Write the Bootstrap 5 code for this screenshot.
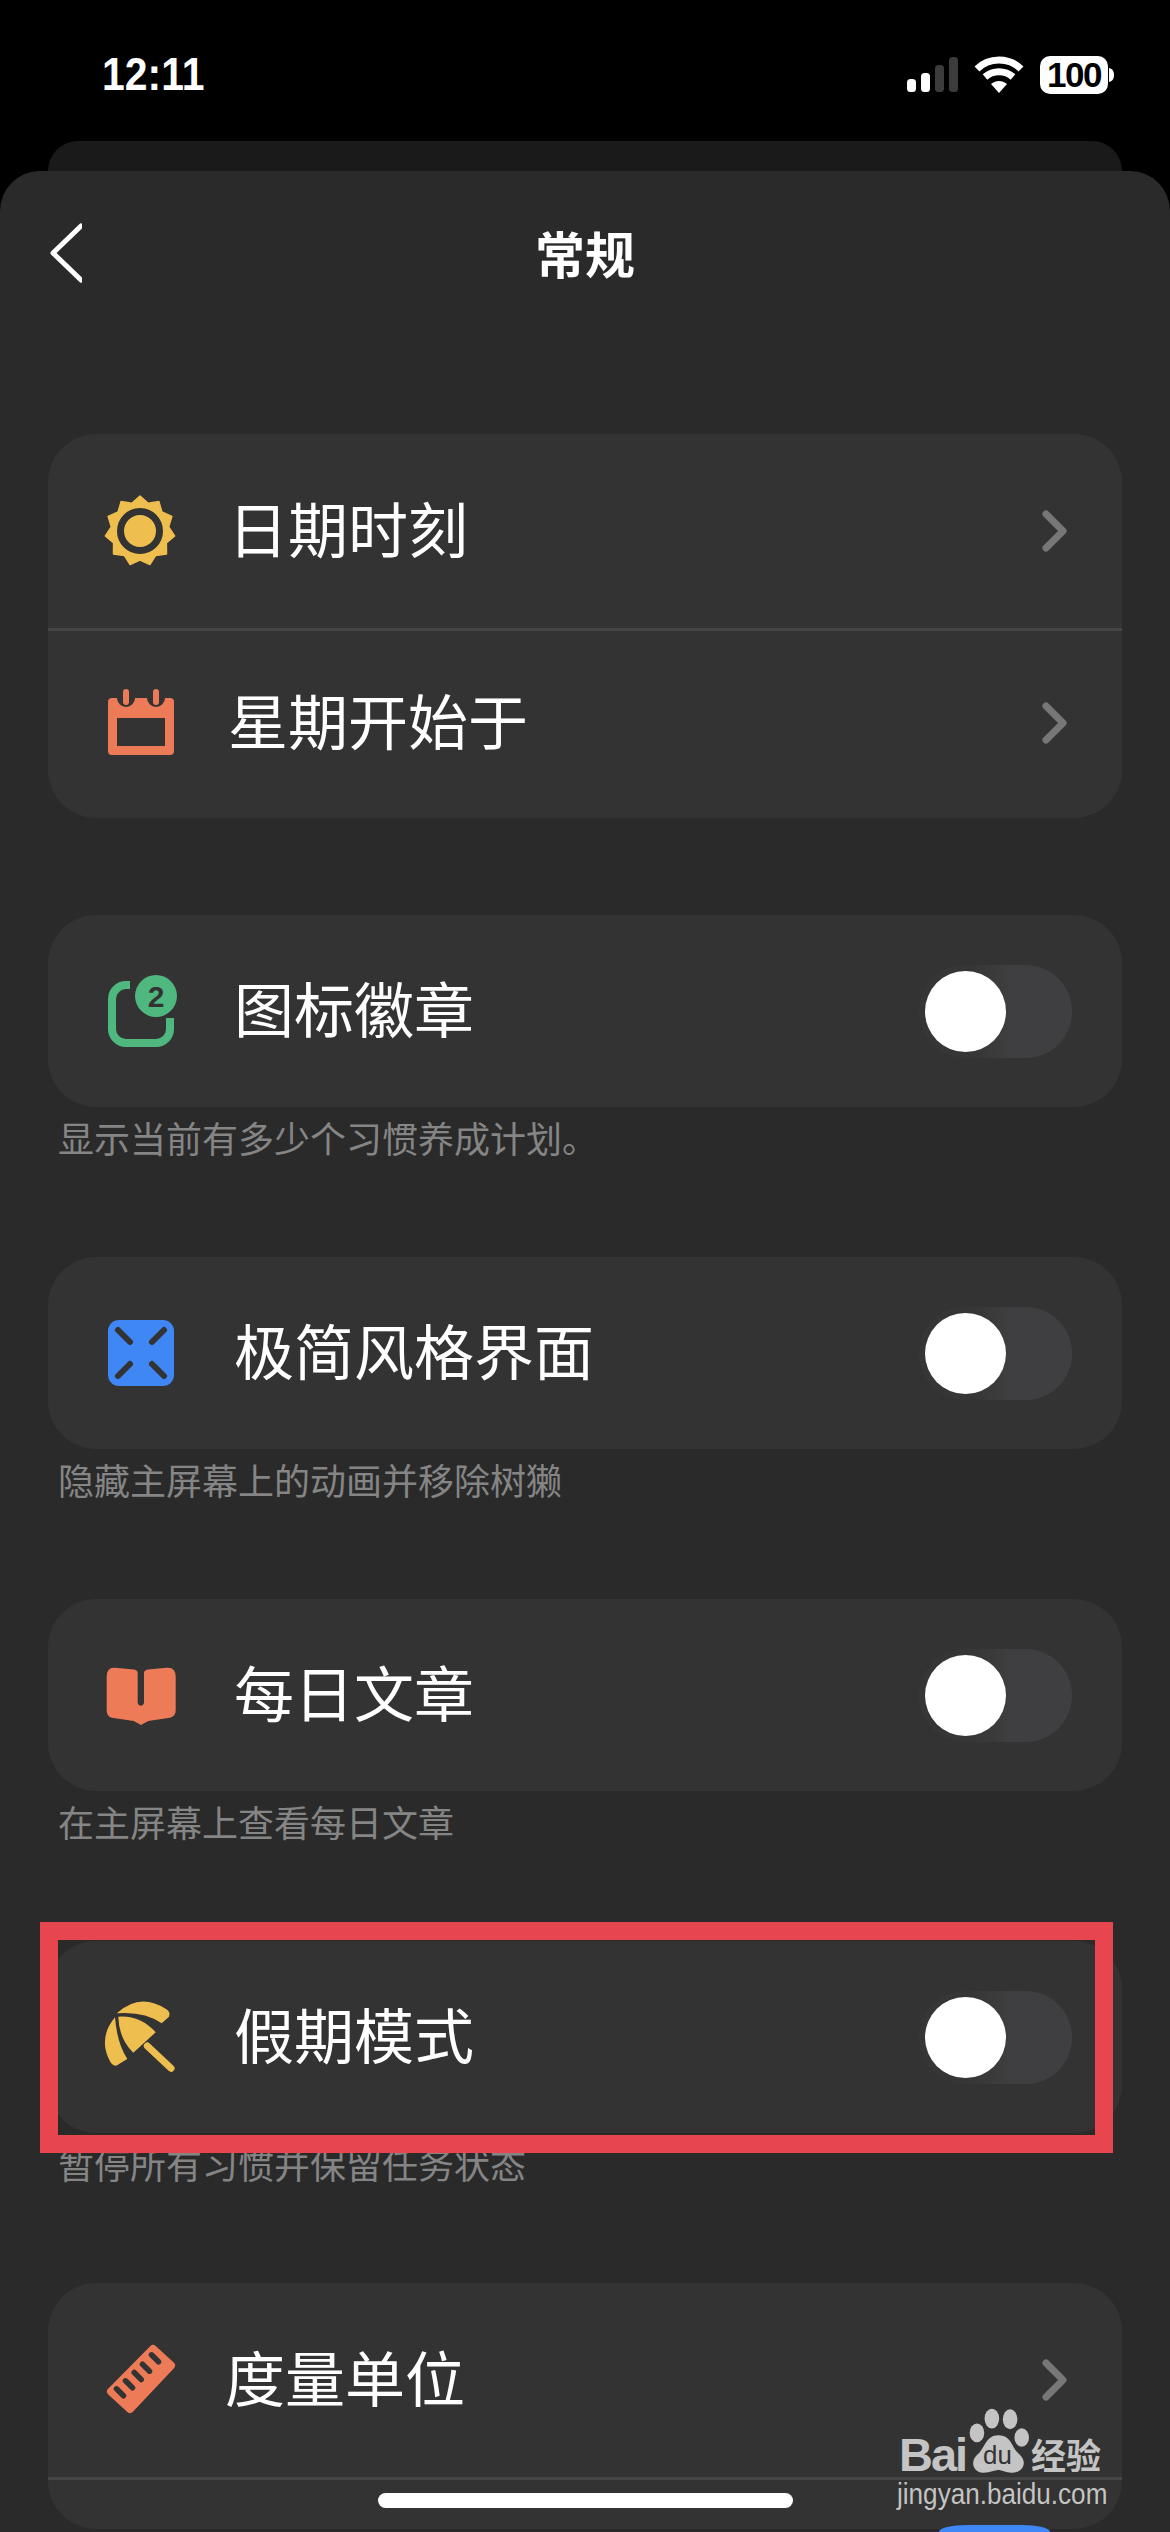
<!DOCTYPE html>
<html lang="zh">
<head>
<meta charset="utf-8">
<title>常规</title>
<link href="https://cdn.jsdelivr.net/npm/bootstrap@5.3.0/dist/css/bootstrap.min.css" rel="stylesheet">
<style>
html,body{margin:0;height:2532px;overflow:hidden;background:#000;}
body{position:relative;width:1170px;font-family:"Noto Sans CJK SC","Liberation Sans",sans-serif;color:#fff;}
.statusbar{height:141px;padding:0 56px 0 102px;}
.clock{font-family:"Liberation Sans",sans-serif;font-size:46px;font-weight:700;line-height:1;margin-top:6px;transform:scaleX(.89);transform-origin:left;}
.stat-icons{margin-top:8px;}
.batt{width:68px;height:38px;background:#fff;border-radius:10px;color:#000;font:700 35px/38px "Liberation Sans",sans-serif;text-align:center;letter-spacing:-1.5px;}
.peek{height:30px;margin:0 48px;background:#1a1a1a;border-radius:32px 32px 0 0;}
.sheet{height:2361px;background:#2a2a2a;border-radius:40px 40px 0 0;padding:0 48px;overflow:hidden;}
.topnav{height:263px;padding-top:51px;position:relative;}
.backbtn{position:absolute;left:0;top:52px;}
.screen-title{font-size:50px;font-weight:700;line-height:60px;text-align:center;}
.panel{background:#333;border-radius:48px;}
.setrow{height:192px;padding:0 50px 0 56px;}
.setrow.r-first{height:194px;}
.setrow.r-second{height:190px;padding-bottom:4px;}
.setrow.r-stub{height:52px;}
.setrow+.setrow{border-top:3px solid #454545;}
.ico{width:72px;height:72px;flex:none;display:block;overflow:visible;}
.lab{font-size:60px;line-height:80px;font-weight:400;margin-bottom:8px;}
.lab-a{margin-left:52px;}
.lab-b{margin-left:58px;}
.lab-c{margin-left:49px;}
.chev{flex:none;margin-right:4px;}
.gap-block{height:97px;}
.cap{height:150px;padding:5px 0 0 10px;font-size:36px;line-height:50px;color:#858585;}
.tgl{width:153px;height:93px;border-radius:47px;background:linear-gradient(90deg,#363636 35%,#3f3f41 60%);padding:6px;flex:none;}
.knob{width:81px;height:81px;border-radius:50%;background:#fff;display:block;}
.redbox{position:absolute;left:40px;top:1922px;width:1073px;height:231px;border:18px solid #e8464e;}
.homebar{position:absolute;left:378px;top:2493px;width:415px;height:15px;background:#fff;border-radius:8px;}
.bluebit{position:absolute;left:939px;top:2525px;width:111px;height:7px;background:#3f87f5;border-radius:28px 28px 0 0/7px 7px 0 0;}
.wm{position:absolute;left:896px;top:2405px;width:215px;color:#c4c4c4;}
.wm-main{font:700 47px/1 "Liberation Sans",sans-serif;position:absolute;left:3px;top:26px;letter-spacing:-2px;}
.wm-cn{font-size:35px;font-weight:700;position:absolute;left:135px;top:28px;line-height:1.2;white-space:nowrap;}
.wm-url{font:400 29px/1 "Liberation Sans",sans-serif;position:absolute;left:1px;top:75px;transform:scaleX(.9);transform-origin:left;white-space:nowrap;}
.wm-paw{position:absolute;left:71px;top:2px;}
</style>
</head>
<body>
<div class="statusbar d-flex justify-content-between align-items-center">
  <div class="clock">12:11</div>
  <div class="stat-icons d-flex align-items-center">
    <svg width="52" height="36" viewBox="0 0 52 36" class="me-3"><rect x="1" y="22" width="9" height="13" rx="3.5" fill="#fff"/><rect x="15" y="16" width="9" height="19" rx="3.5" fill="#fff"/><rect x="29" y="8" width="9" height="27" rx="3.5" fill="#3c3c3c"/><rect x="43" y="0" width="9" height="35" rx="3.5" fill="#3c3c3c"/></svg>
    <svg width="50" height="38" viewBox="0 0 50 38" class="me-3"><path d="M3 13C15 1 35 1 47 13M11 21c8-7 20-7 28 0" fill="none" stroke="#fff" stroke-width="7"/><path d="M17 28c5-4 11-4 16 0l-8 9z" fill="#fff"/></svg>
    <div class="batt">100</div>
    <svg width="6" height="14" viewBox="0 0 6 14"><path d="M1 0c4 1 5 4 5 7s-1 6-5 7z" fill="#fff"/></svg>
  </div>
</div>
<div class="peek"></div>
<main class="sheet">
  <div class="topnav">
    <svg class="backbtn" width="34" height="60" viewBox="0 0 34 60"><path d="M33 3 5 30l28 27" fill="none" stroke="#fff" stroke-width="5" stroke-linecap="round" stroke-linejoin="round"/></svg>
    <div class="screen-title">常规</div>
  </div>

  <section class="panel">
    <div class="setrow r-first d-flex align-items-center">
      <svg class="ico" viewBox="-36 -36 72 72"><path fill="#eebf4f" stroke="#eebf4f" stroke-width="1.5" stroke-linejoin="round" d="M0-35 8.2-27.8 18.9-29.4 21.9-19 31.8-14.5 28.7-4.1 34.6 5 26.4 12 26.5 22.9 15.7 24.4 9.9 33.6 0 29-9.9 33.6-15.7 24.4-26.5 22.9-26.4 12-34.6 5-28.7-4.1-31.8-14.5-21.9-19-18.9-29.4-8.2-27.8z"/><circle r="19.5" fill="none" stroke="#333" stroke-width="7"/></svg>
      <span class="lab lab-a flex-grow-1">日期时刻</span>
      <svg class="chev" width="26" height="42" viewBox="0 0 26 42"><path d="M4 4 21 21 4 38" fill="none" stroke="#777" stroke-width="7" stroke-linecap="round" stroke-linejoin="round"/></svg>
    </div>
    <div class="setrow r-second d-flex align-items-center">
      <svg class="ico" viewBox="0 0 72 72"><path fill="#ee7b57" fill-rule="evenodd" d="M8 11h5a9 9 0 0 0 18 0h12a9 9 0 0 0 18 0h5a4 4 0 0 1 4 4v49a4 4 0 0 1-4 4H8a4 4 0 0 1-4-4V15a4 4 0 0 1 4-4zM13 31v28h48V31z"/><rect x="19" y="2" width="6" height="16" rx="3" fill="#ee7b57"/><rect x="49" y="2" width="6" height="16" rx="3" fill="#ee7b57"/></svg>
      <span class="lab lab-a flex-grow-1">星期开始于</span>
      <svg class="chev" width="26" height="42" viewBox="0 0 26 42"><path d="M4 4 21 21 4 38" fill="none" stroke="#777" stroke-width="7" stroke-linecap="round" stroke-linejoin="round"/></svg>
    </div>
  </section>
  <div class="gap-block"></div>

  <section class="panel">
    <div class="setrow d-flex align-items-center">
      <svg class="ico" viewBox="0 0 72 72"><path d="M26 10H22A14 14 0 0 0 8 24V54A14 14 0 0 0 22 68H52A14 14 0 0 0 66 54V43" fill="none" stroke="#4fb87f" stroke-width="8"/><circle cx="52" cy="21" r="21" fill="#4fb87f"/><text x="52" y="32" text-anchor="middle" font-family="Liberation Sans" font-weight="700" font-size="30" fill="#333">2</text></svg>
      <span class="lab lab-b flex-grow-1">图标徽章</span>
      <span class="tgl"><span class="knob"></span></span>
    </div>
  </section>
  <div class="cap">显示当前有多少个习惯养成计划。</div>

  <section class="panel">
    <div class="setrow d-flex align-items-center">
      <svg class="ico" viewBox="0 0 72 72"><rect x="4" y="3" width="66" height="66" rx="11" fill="#3f87f5"/><path d="M14 13 26 25M60 13 48 25M14 59 26 47M60 59 48 47" stroke="#333" stroke-width="6" stroke-linecap="round"/></svg>
      <span class="lab lab-b flex-grow-1">极简风格界面</span>
      <span class="tgl"><span class="knob"></span></span>
    </div>
  </section>
  <div class="cap">隐藏主屏幕上的动画并移除树獭</div>

  <section class="panel">
    <div class="setrow d-flex align-items-center">
      <svg class="ico" viewBox="0 0 72 72"><path fill="#ee7b57" d="M11 8.7 30 10.5Q33.7 11 33.7 14V44A3.2 3.2 0 0 0 40 44V14Q40 11 44 10.5L62.7 8.7Q71.7 8 71.7 17.7V51Q71.7 57.5 66 58.7L44.3 62 37 66 29.7 62 7.7 58.7Q2.7 57.5 2.7 51V17.7Q2.7 8 11 8.7Z"/></svg>
      <span class="lab lab-b flex-grow-1">每日文章</span>
      <span class="tgl"><span class="knob"></span></span>
    </div>
  </section>
  <div class="cap">在主屏幕上查看每日文章</div>

  <section class="panel">
    <div class="setrow d-flex align-items-center">
      <svg class="ico" viewBox="0 0 72 72"><g fill="#eebf4f"><path d="M12.7 12.3Q36-9 62 8 67 11 65 15.7L57.7 22.3Q40 10 12.7 12.3Z"/><path d="M14.3 15.7Q36 14 51.7 31.3L29.3 51.7Q15 38 14.3 15.7Z"/><path d="M11 16.3Q-7 38 7 62 11 67 15 63L23.3 58Q13 42 11 16.3Z"/></g><path d="M43.3 45 67 67.3" stroke="#eebf4f" stroke-width="7" stroke-linecap="round"/></svg>
      <span class="lab lab-b flex-grow-1">假期模式</span>
      <span class="tgl"><span class="knob"></span></span>
    </div>
  </section>
  <div class="cap">暂停所有习惯并保留任务状态</div>

  <section class="panel">
    <div class="setrow r-first d-flex align-items-center">
      <svg class="ico" viewBox="0 0 72 72"><path fill="#ee7b57" stroke="#ee7b57" stroke-width="8" stroke-linejoin="round" d="M49 5 67 21.5 26 65 7 47.5z"/><path d="M47.5 10.8 54.5 17.8M38.5 20.2 45.5 27.2M30.2 28.5 37.2 35.5M21.5 36.8 28.5 43.8M12.5 44.8 19.5 51.8" stroke="#333" stroke-width="5.5" stroke-linecap="round"/></svg>
      <span class="lab lab-c flex-grow-1">度量单位</span>
      <svg class="chev" width="26" height="42" viewBox="0 0 26 42"><path d="M4 4 21 21 4 38" fill="none" stroke="#777" stroke-width="7" stroke-linecap="round" stroke-linejoin="round"/></svg>
    </div>
    <div class="setrow r-stub"></div>
  </section>
</main>

<div class="redbox"></div>
<div class="bluebit"></div>
<div class="homebar"></div>
<div class="wm">
  <svg class="wm-paw" width="63" height="68" viewBox="260 20 190 205"><g fill="#c4c4c4"><ellipse cx="335" cy="55" rx="22" ry="30"/><ellipse cx="390" cy="57" rx="22" ry="30"/><ellipse cx="290" cy="98" rx="22" ry="28"/><ellipse cx="425" cy="112" rx="22" ry="28"/><path d="M355 105C395 105 395 145 420 165 445 190 425 220 395 218 375 218 365 210 355 210 345 210 330 218 310 218 285 220 265 190 290 165 315 145 315 105 355 105Z"/></g><text x="352" y="192" text-anchor="middle" font-family="Liberation Sans" font-size="78" fill="#333">du</text></svg>
  <span class="wm-main">Bai</span>
  <span class="wm-cn">经验</span>
  <span class="wm-url">jingyan.baidu.com</span>
</div>
<script src="https://cdn.jsdelivr.net/npm/bootstrap@5.3.0/dist/js/bootstrap.bundle.min.js"></script>
</body>
</html>
